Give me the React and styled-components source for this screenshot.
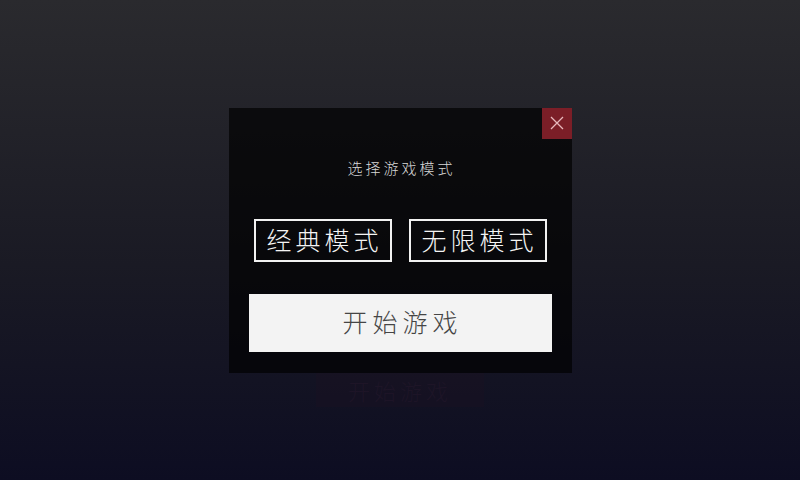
import React from "react";
import styled, { createGlobalStyle } from "styled-components";

const Global = createGlobalStyle`
  html, body { margin: 0; padding: 0; width: 800px; height: 480px; overflow: hidden; }
  body { font-family: "Noto Sans CJK SC", "Noto Sans", sans-serif; }
`;

const Page = styled.div`
  position: relative;
  width: 800px;
  height: 480px;
  background: linear-gradient(to bottom, #2a2a2e 0%, #1a1a24 55%, #0d0d22 100%);
  display: flex;
  flex-direction: column;
  align-items: center;
  padding-top: 373px;
  box-sizing: border-box;
`;

const HiddenStart = styled.div`
  width: 168px;
  height: 34px;
  background: rgba(90, 20, 40, 0.06);
  color: rgba(60, 35, 60, 0.22);
  font-size: 22px;
  font-weight: 300;
  letter-spacing: 4px;
  display: flex;
  align-items: center;
  justify-content: center;
`;

const Overlay = styled.div`
  position: absolute;
  inset: 0;
  display: flex;
  align-items: center;
  justify-content: center;
`;

const Modal = styled.div`
  position: relative;
  width: 343px;
  height: 265px;
  box-sizing: border-box;
  background: rgba(0, 0, 0, 0.68);
  padding: 50px 20px 21px;
  display: flex;
  flex-direction: column;
  align-items: stretch;
`;

const Close = styled.button`
  position: absolute;
  top: 0;
  right: 0;
  width: 30px;
  height: 31px;
  border: none;
  padding: 0;
  background: #7b1e27;
  display: flex;
  align-items: center;
  justify-content: center;
  cursor: pointer;
`;

const Title = styled.div`
  color: #d8d8d8;
  font-size: 15px;
  font-weight: 300;
  line-height: 20px;
  letter-spacing: 3px;
  text-align: center;
  padding-left: 3px;
`;

const ModeRow = styled.div`
  margin-top: 41px;
  display: flex;
  justify-content: center;
  gap: 17px;
`;

const ModeButton = styled.button`
  width: 138px;
  height: 43px;
  box-sizing: border-box;
  border: 2px solid #f2f2f2;
  background: transparent;
  color: #f4f4f4;
  font-family: inherit;
  font-size: 25px;
  font-weight: 300;
  letter-spacing: 4px;
  padding: 0 0 2px 4px;
  display: flex;
  align-items: center;
  justify-content: center;
`;

const StartButton = styled.button`
  margin-top: 32px;
  height: 58px;
  border: none;
  background: #f3f3f3;
  color: #454545;
  font-family: inherit;
  font-size: 25px;
  font-weight: 300;
  letter-spacing: 5px;
  padding: 0 0 3px 5px;
  display: flex;
  align-items: center;
  justify-content: center;
`;

export default function App() {
  return (
    <>
      <Global />
      <Page>
        <HiddenStart>开始游戏</HiddenStart>
        <Overlay>
          <Modal>
            <Close aria-label="关闭">
              <svg width="14" height="14" viewBox="0 0 14 14">
                <path d="M1 1 L13 13 M13 1 L1 13" stroke="#e8b8bc" strokeWidth="1.3" fill="none" />
              </svg>
            </Close>
            <Title>选择游戏模式</Title>
            <ModeRow>
              <ModeButton>经典模式</ModeButton>
              <ModeButton>无限模式</ModeButton>
            </ModeRow>
            <StartButton>开始游戏</StartButton>
          </Modal>
        </Overlay>
      </Page>
    </>
  );
}
